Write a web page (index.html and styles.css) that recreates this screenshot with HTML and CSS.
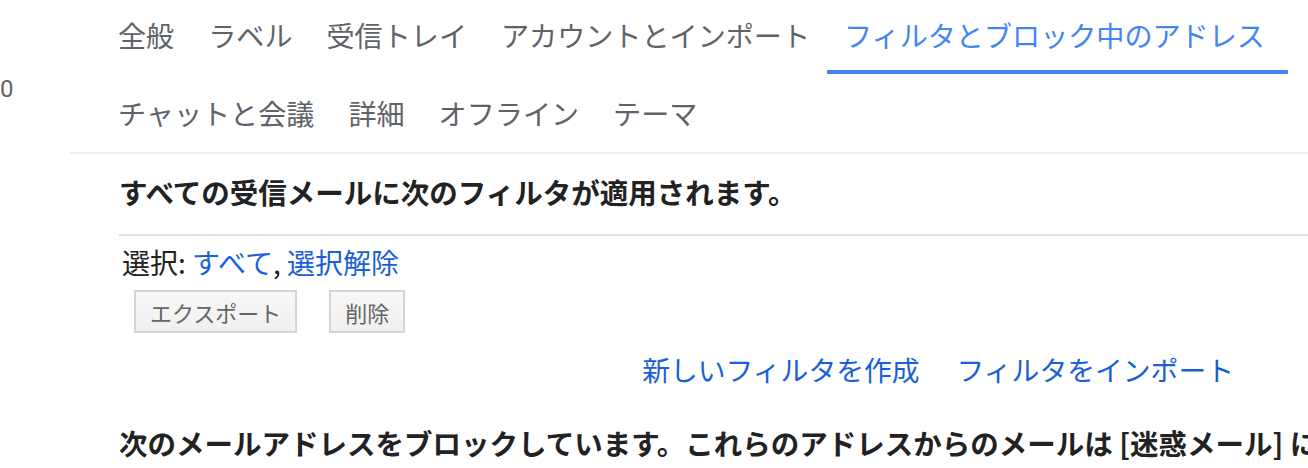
FILE: index.html
```html
<!DOCTYPE html>
<html lang="ja">
<head>
<meta charset="utf-8">
<title>設定 - フィルタとブロック中のアドレス</title>
<link rel="stylesheet" href="styles.css">
</head>
<body>
<div class="page">
  <aside class="sidebar">
    <div class="count">0</div>
  </aside>
  <main class="main">
    <nav class="tabs">
      <div class="tab-row first">
        <a class="tab">全般</a>
        <a class="tab">ラベル</a>
        <a class="tab">受信トレイ</a>
        <a class="tab">アカウントとインポート</a>
        <a class="tab active">フィルタとブロック中のアドレス</a>
        <a class="tab">メール転送と POP/IMAP</a>
      </div>
      <div class="tab-row second">
        <a class="tab">チャットと会議</a>
        <a class="tab">詳細</a>
        <a class="tab">オフライン</a>
        <a class="tab">テーマ</a>
      </div>
    </nav>
    <section class="content">
      <h2 class="heading top">すべての受信メールに次のフィルタが適用されます。</h2>
      <div class="select-row">選択: <a class="link">すべて</a>, <a class="link">選択解除</a></div>
      <div class="buttons">
        <button class="btn">エクスポート</button>
        <button class="btn">削除</button>
      </div>
      <div class="actions">
        <a class="link">新しいフィルタを作成</a>
        <a class="link">フィルタをインポート</a>
      </div>
      <h2 class="heading bottom">次のメールアドレスをブロックしています。これらのアドレスからのメールは [迷惑メール] に表示されます。</h2>
    </section>
  </main>
</div>
</body>
</html>
```
FILE: styles.css
```css
html, body {
  margin: 0;
  padding: 0;
  background: #fff;
}
body {
  width: 1308px;
  height: 468px;
  overflow: hidden;
  font-family: "Noto Sans CJK JP", "Noto Sans", sans-serif;
}
.page {
  display: flex;
  width: 1308px;
}
.sidebar {
  width: 70px;
  flex: none;
}
.count {
  margin-top: 74px;
  font-family: "Roboto", "Noto Sans", sans-serif;
  font-size: 24px;
  line-height: 30px;
  color: #5f6368;
}
.main {
  flex: 1;
  min-width: 0;
}
.tabs {
  border-bottom: 2px solid #eceff1;
  padding-left: 31px;
}
.tab-row {
  display: flex;
  white-space: nowrap;
  overflow: hidden;
}
.tab {
  font-size: 28.1px;
  color: #5f6368;
  padding: 0 17px;
  flex: none;
}
.first .tab {
  height: 70px;
  line-height: 70px;
  border-bottom: 4px solid transparent;
}
.first .tab.active {
  color: #4285f4;
  border-bottom-color: #4285f4;
  padding-right: 23px;
}
.second .tab {
  height: 78px;
  line-height: 78px;
}
.content {
  margin-left: 49px;
}
.heading {
  margin: 0;
  font-size: 28.5px;
  font-weight: 700;
  color: #222;
  line-height: 40px;
  white-space: nowrap;
}
.heading.top {
  padding: 18px 0 22px;
  border-bottom: 2px solid #e1e1e1;
}
.heading.bottom {
  margin-top: 34px;
}
.select-row {
  padding: 8px 0 0 3px;
  font-size: 28px;
  line-height: 36px;
  color: #222;
}
.link {
  color: #1a5fd6;
}
.buttons {
  display: flex;
  gap: 32px;
  margin: 10px 0 0 15px;
}
.btn {
  font-family: inherit;
  font-size: 22px;
  color: #666;
  height: 43px;
  padding: 0 14px;
  border: 2px solid #d5d5d5;
  background: linear-gradient(#f8f8f8, #f0f0f0);
  border-radius: 0;
}
.actions {
  display: flex;
  justify-content: flex-end;
  gap: 37px;
  margin-top: 16px;
  padding-right: 74px;
  font-size: 27.8px;
  line-height: 40px;
}
```
